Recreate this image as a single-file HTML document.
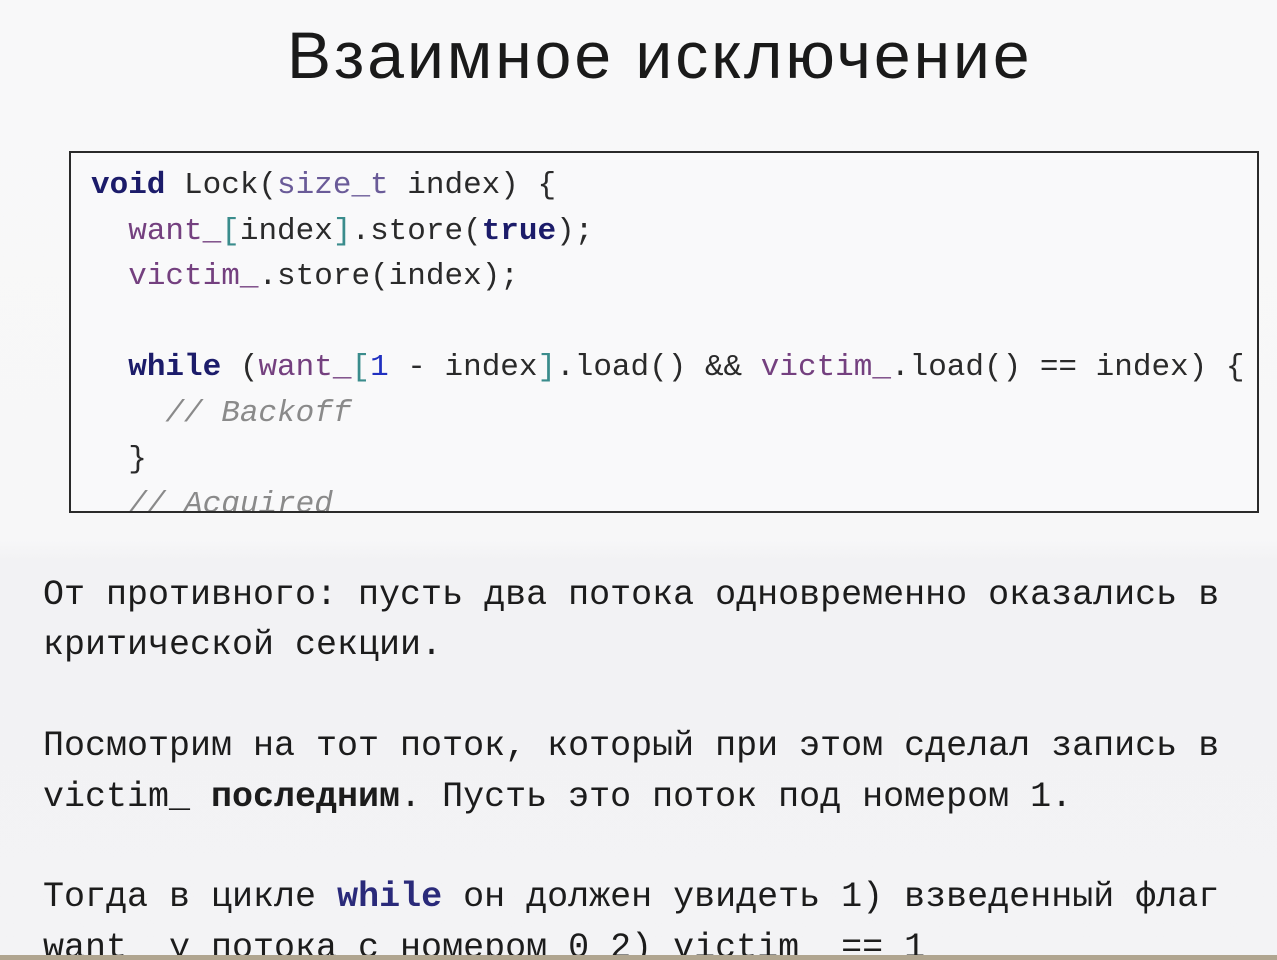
<!DOCTYPE html>
<html><head><meta charset="utf-8"><style>
html,body{margin:0;padding:0;overflow:hidden;}
body{width:1277px;height:960px;overflow:hidden;position:relative;background:linear-gradient(#f8f8f9 0,#f7f7f8 540px,#f2f2f4 560px,#f3f3f5 960px);font-family:"Liberation Mono",monospace;}
.title{position:absolute;left:287px;top:17px;white-space:nowrap;font-family:"Liberation Sans",sans-serif;font-size:66px;color:#1a1a1a;letter-spacing:3px;}
.box{position:absolute;left:69px;top:151px;width:1186px;height:358px;border:2px solid #2a2a2a;background:#f9f9fa;overflow:hidden;}
.code{position:absolute;left:20px;top:10px;font-size:31px;line-height:45.6px;color:#2a2a2a;white-space:pre;}
.kw{color:#1c1c6a;font-weight:bold}
.v{color:#74407f}
.t{color:#6a5b98}
.b{color:#3a8c8c}
.n{color:#2030c0}
.c{color:#8a8a8a;font-style:italic}
.txt{position:absolute;left:43px;top:570px;font-size:35px;line-height:50.4px;color:#1c1c1c;white-space:pre;}
.bottom{position:absolute;left:0;top:955px;width:1277px;height:5px;background:#b0a590;}
</style></head><body>
<div class="title">Взаимное исключение</div>
<div class="box"><div class="code"><span class="kw">void</span> Lock(<span class="t">size_t</span> index) {
  <span class="v">want_</span><span class="b">[</span>index<span class="b">]</span>.store(<span class="kw">true</span>);
  <span class="v">victim_</span>.store(index);

  <span class="kw">while</span> (<span class="v">want_</span><span class="b">[</span><span class="n">1</span> - index<span class="b">]</span>.load() &amp;&amp; <span class="v">victim_</span>.load() == index) {
    <span class="c">// Backoff</span>
  }
  <span class="c">// Acquired</span></div></div>
<div class="txt">От противного: пусть два потока одновременно оказались в
критической секции.

Посмотрим на тот поток, который при этом сделал запись в
victim_ <b>последним</b>. Пусть это поток под номером 1.

Тогда в цикле <b style="color:#2a2a7a">while</b> он должен увидеть 1) взведенный флаг
want_ у потока с номером 0 2) victim_ == 1</div>
<div class="bottom"></div>
</body></html>
